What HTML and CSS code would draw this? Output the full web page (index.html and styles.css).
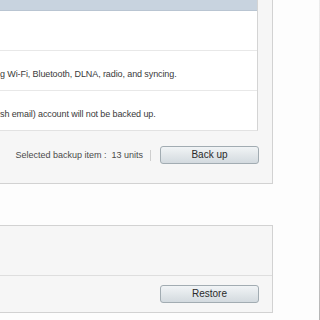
FILE: index.html
```html
<!DOCTYPE html>
<html>
<head>
<meta charset="utf-8">
<link rel="stylesheet" href="styles.css">
</head>
<body>
<div class="page">
  <div class="main">
    <section class="panel backup">
      <div class="table">
        <div class="thead"></div>
        <div class="row"></div>
        <div class="row"><span class="cell">g Wi-Fi, Bluetooth, DLNA, radio, and syncing.</span></div>
        <div class="row"><span class="cell">sh email) account will not be backed up.</span></div>
      </div>
      <div class="footer">
        <span class="summary">Selected backup item :&nbsp; 13 units</span>
        <span class="sep"></span>
        <button class="btn">Back up</button>
      </div>
    </section>
    <section class="panel restore">
      <div class="body"></div>
      <div class="footer foot2">
        <button class="btn">Restore</button>
      </div>
    </section>
  </div>
</div>
</body>
</html>
```
FILE: styles.css
```css
html, body {
  margin: 0;
  padding: 0;
  background: #fcfcfc;
}
body {
  font-family: "Liberation Sans", Arial, sans-serif;
}
.page {
  width: 320px;
  height: 320px;
  box-sizing: border-box;
  overflow: hidden;
  display: flex;
  border-right: 1px solid #d0d0d0;
  border-image: linear-gradient(#ececec, #dcdcdc 60%, #b4b4b4) 1;
  background: #fdfdfd;
}
.main {
  width: 273px;
  display: flex;
  flex-direction: column;
}
.panel {
  box-sizing: border-box;
  width: 273px;
  background: #f6f6f6;
  border-right: 1px solid #d2d2d2;
  border-bottom: 1px solid #d2d2d2;
}
.table {
  width: 258px;
  box-sizing: border-box;
  background: #fff;
  border-right: 1px solid #d4d4d4;
  border-bottom: 1px solid #e2e2e2;
}
.thead {
  height: 10px;
  background: #c8d3df;
  border-bottom: 1px solid #b9c5d2;
}
.row {
  height: 39px;
  box-sizing: content-box;
  border-bottom: 1px solid #e8e8e8;
  padding: 0;
  overflow: hidden;
}
.row:last-child {
  border-bottom: none;
}
.cell {
  display: block;
  padding-top: 18px;
  font-size: 9px;
  line-height: 11px;
  letter-spacing: -0.1px;
  color: #3a3a3a;
  white-space: nowrap;
}
.footer {
  display: flex;
  justify-content: flex-end;
  align-items: center;
  height: 18px;
  padding: 15px 13px 19px 0;
}
.summary {
  font-size: 9px;
  line-height: 11px;
  color: #4a4a4a;
  white-space: nowrap;
}
.sep {
  width: 1px;
  height: 11px;
  background: #cfcfcf;
  margin: 0 9px 0 7px;
}
.btn {
  box-sizing: border-box;
  width: 99px;
  height: 18px;
  margin: 0;
  padding: 0;
  border: 1px solid #a2acb2;
  border-radius: 3px;
  background: linear-gradient(#f1f4f6, #e2e7ea 50%, #d3dadf);
  font-family: "Liberation Sans", Arial, sans-serif;
  font-size: 10px;
  line-height: 16px;
  color: #2a2a2a;
  text-align: center;
}
.restore {
  margin-top: 41px;
  border-top: 1px solid #d2d2d2;
}
.restore .body {
  height: 49px;
}
.foot2 {
  border-top: 1px solid #dedede;
  padding: 9px 13px 9px 0;
}
```
